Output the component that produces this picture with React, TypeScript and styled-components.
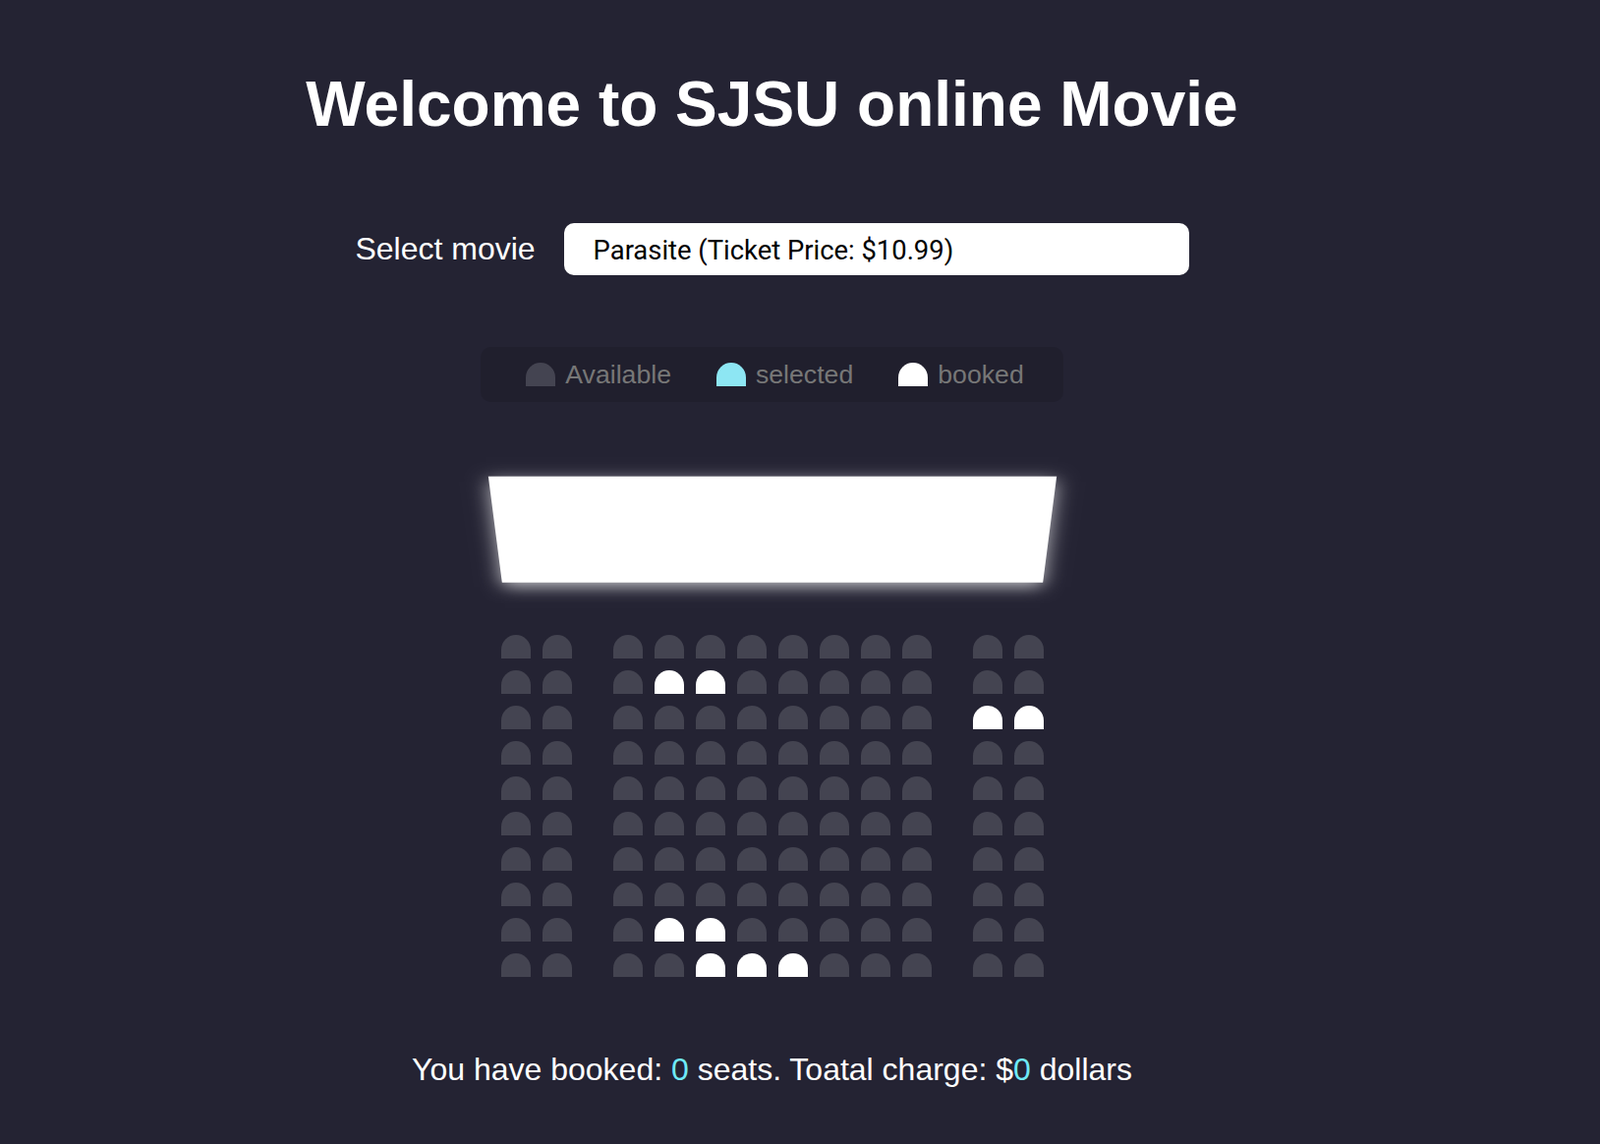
import React from 'react';
import styled, { createGlobalStyle } from 'styled-components';

type SeatStatus = 'available' | 'selected' | 'booked';

const GlobalStyle = createGlobalStyle`
  html, body {
    margin: 0;
    padding: 0;
    background: #242333;
  }
  body {
    font-family: "Liberation Sans", Arial, Helvetica, sans-serif;
    color: #fff;
  }
`;

const Page = styled.main`
  width: 1571px;
  min-height: 1164px;
  box-sizing: border-box;
  padding-top: 26px;
  display: flex;
  flex-direction: column;
  align-items: center;
`;

const Title = styled.h1`
  font-size: 64px;
  font-weight: 700;
  line-height: 74px;
  margin: 43px 0 0;
`;

const MovieRow = styled.div`
  margin-top: 84px;
  display: flex;
  align-items: baseline;
  gap: 29px;
`;

const Label = styled.label`
  font-size: 32px;
`;

const MovieSelect = styled.select`
  appearance: none;
  -webkit-appearance: none;
  background: #fff;
  color: #000;
  border: 0;
  border-radius: 10px;
  font-family: Roboto, "Noto Sans", sans-serif;
  font-size: 27.4px;
  width: 636px;
  height: 53px;
  padding: 2px 30px 0;
  box-sizing: border-box;
  outline: none;
`;

const Showcase = styled.ul`
  list-style: none;
  margin: 73px 0 0;
  padding: 10px 20px;
  border-radius: 10px;
  background: rgba(0, 0, 0, 0.1);
  color: #777;
  display: flex;
  justify-content: space-between;
`;

const ShowcaseItem = styled.li`
  display: flex;
  align-items: center;
  justify-content: center;
  margin: 0 20px;
`;

const Caption = styled.small`
  font-size: 26.67px;
  margin-left: 4px;
`;

const seatColors: Record<SeatStatus, string> = {
  available: '#444451',
  selected: '#8de6f3',
  booked: '#ffffff',
};

const Seat = styled.div<{ $status: SeatStatus }>`
  width: 30px;
  height: 24px;
  margin: 6px;
  border-top-left-radius: 20px;
  border-top-right-radius: 20px;
  background: ${(p) => seatColors[p.$status]};
`;

const Theater = styled.div`
  margin-top: 31px;
  perspective: 2000px;
`;

const Screen = styled.div`
  background: #fff;
  height: 140px;
  width: 100%;
  margin: 30px 0;
  transform: rotateX(-45deg);
  box-shadow: 0 6px 20px rgba(255, 255, 255, 0.7);
`;

const SeatRow = styled.div`
  display: flex;
  & > ${Seat}:nth-of-type(2) {
    margin-right: 36px;
  }
  & > ${Seat}:nth-last-of-type(2) {
    margin-left: 36px;
  }
`;

const Summary = styled.p`
  font-size: 32px;
  margin: 70px 0 0;
`;

const Highlight = styled.span`
  color: #6feaf6;
`;

const booked: Record<number, number[]> = {
  1: [3, 4],
  2: [10, 11],
  8: [3, 4],
  9: [4, 5, 6],
};

const rows = Array.from({ length: 10 }, (_, r) =>
  Array.from({ length: 12 }, (_, c): SeatStatus =>
    (booked[r] || []).includes(c) ? 'booked' : 'available'
  )
);

export default function App() {
  return (
    <>
      <GlobalStyle />
      <Page>
        <Title>Welcome to SJSU online Movie</Title>
        <MovieRow>
          <Label htmlFor="movie">Select movie</Label>
          <MovieSelect id="movie" defaultValue="10.99">
            <option value="10.99">Parasite (Ticket Price: $10.99)</option>
          </MovieSelect>
        </MovieRow>
        <Showcase>
          <ShowcaseItem>
            <Seat $status="available" />
            <Caption>Available</Caption>
          </ShowcaseItem>
          <ShowcaseItem>
            <Seat $status="selected" />
            <Caption>selected</Caption>
          </ShowcaseItem>
          <ShowcaseItem>
            <Seat $status="booked" />
            <Caption>booked</Caption>
          </ShowcaseItem>
        </Showcase>
        <Theater>
          <Screen />
          {rows.map((row, r) => (
            <SeatRow key={r}>
              {row.map((s, c) => (
                <Seat key={c} $status={s} />
              ))}
            </SeatRow>
          ))}
        </Theater>
        <Summary>
          You have booked: <Highlight>0</Highlight> seats. Toatal charge: $
          <Highlight>0</Highlight> dollars
        </Summary>
      </Page>
    </>
  );
}
